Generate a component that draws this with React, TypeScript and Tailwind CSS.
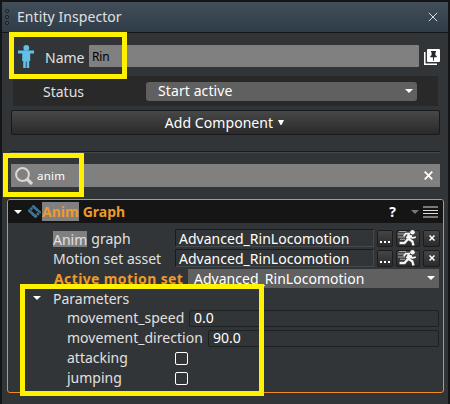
import type { ReactNode } from "react";

function Caret({ className = "" }: { className?: string }) {
  return (
    <svg viewBox="0 0 8 4" className={`h-[4px] w-[8px] shrink-0 ${className}`} fill="currentColor">
      <path d="M0 0h8L4 4z" />
    </svg>
  );
}

function PersonIcon() {
  return (
    <svg viewBox="0 0 16 23" className="h-[23px] w-[16px] shrink-0" fill="#62bfe6">
      <circle cx="8.300" cy="2.900" r="2.900" />
      <path d="M0 5.600H16V8.500h-3.800V16h-1v7H8.600v-6.500h-.8V23H5.200v-7h-1V8.500H0z" />
    </svg>
  );
}

function PinIcon() {
  return (
    <svg viewBox="0 0 16 16" className="h-[16px] w-[16px] shrink-0">
      <path d="M.8 3v12.200H13" fill="none" stroke="#fff" strokeWidth="1.500" />
      <rect x="3" width="13" height="13" rx="1" fill="#fff" />
      <path d="M7 2h5v1.200h-.6v3L12.700 7v1.200h-2.600L9.800 12h-.6l-.3-3.800H6.300V7l1.300-.8v-3H7z" fill="#252729" />
    </svg>
  );
}

function SearchIcon() {
  return (
    <svg viewBox="0 0 18 18" className="h-[18px] w-[18px] shrink-0" fill="none" stroke="#d8d8d8">
      <circle cx="7.500" cy="7.500" r="6.400" strokeWidth="2" />
      <path d="M12 12l5 5" strokeWidth="3.200" />
    </svg>
  );
}

function CloseIcon({ className }: { className: string }) {
  return (
    <svg viewBox="0 0 10 10" className={`shrink-0 ${className}`} fill="none" stroke="currentColor">
      <path d="M.8.8l8.400 8.400M9.200.8L.8 9.200" />
    </svg>
  );
}

function MenuIcon() {
  return (
    <svg viewBox="0 0 15 12" className="h-[12px] w-[15px] shrink-0" fill="#dddddd">
      <path d="M0 .5h15v1H0zM0 4h15v1H0zM0 7h15v1H0zM0 10.500h15v1H0z" />
    </svg>
  );
}

function GraphIcon() {
  return (
    <svg viewBox="0 0 13 13" className="h-[13px] w-[13px] shrink-0" fill="none">
      <path d="M5.500 1.500l6 5.800-4 4.200-6-5.800z" stroke="#3c7593" strokeWidth="2.800" />
      <path d="M3 1.500l3 3M1 3.500l3 3M7 8l3 3M9 6l3 3" stroke="#151515" strokeWidth=".7" />
      <path d="M6.500 2.500L8 4M4 9.500L5.500 11" stroke="#3c7593" strokeWidth="1" />
    </svg>
  );
}

function RunnerIcon() {
  return (
    <svg viewBox="0 0 20 16" className="h-[16px] w-[20px]" fill="none" stroke="#f4f4f4">
      <circle cx="14.500" cy="2.300" r="2.300" fill="#f4f4f4" stroke="none" />
      <path d="M12 4.800L9.800 9" strokeWidth="4.600" />
      <path d="M12 3.700L7.500 3.600 5.800 6.500M12.500 5.500l1.700 2.500 3.600-.8" strokeWidth="1.700" />
      <path d="M9.500 8.500l4.800 2.700 1.200 4.300M9.500 9.500L6.500 13H1.500" strokeWidth="2.400" />
      <path d="M1 1.500h7M0 4h6M0 7h7M2 9.300h5" strokeWidth="1" stroke="#a5a5a5" />
    </svg>
  );
}

function SmallButton({ children, className }: { children: ReactNode; className: string }) {
  return (
    <div className={`flex h-[17px] shrink-0 items-center justify-center rounded-[2px] border border-[#1a1c1d] bg-linear-to-b from-[#454545] to-[#2b2b2b] ${className}`}>
      {children}
    </div>
  );
}

function AssetRow({ children }: { children: ReactNode }) {
  return (
    <div className="flex h-5 items-center pl-[45px]">
      <div className="mt-px flex h-5 w-[122px] items-center">{children}</div>
      <div className="flex h-[18px] w-[199px] items-center border border-r-[#45494b] border-b-[#45494b] border-t-[#191b1c] border-l-[#191b1c] pl-[3px] tracking-[0.02px] text-white">
        <span className="mt-px">Advanced_RinLocomotion</span>
      </div>
      <SmallButton className="ml-[3px] w-[16px]">
        <span className="mt-[8px] flex gap-[2px]">
          <i className="size-[2px] bg-white" />
          <i className="size-[2px] bg-white" />
          <i className="size-[2px] bg-white" />
        </span>
      </SmallButton>
      <SmallButton className="ml-[3px] w-[24px]">
        <RunnerIcon />
      </SmallButton>
      <SmallButton className="ml-[3px] w-[17px] text-white">
        <CloseIcon className="size-[6px] stroke-[2.500]" />
      </SmallButton>
    </div>
  );
}

function NumberRow({ label, value, labelWidth }: { label: string; value: string; labelWidth: string }) {
  return (
    <div className="flex h-5 items-center pl-[59px] pr-[4px]">
      <div className={`shrink-0 tracking-[0.03px] ${labelWidth}`}>{label}</div>
      <div className="flex h-[17px] flex-1 items-center rounded-[2px] border border-[#1e2021] pl-[4px] text-white">{value}</div>
    </div>
  );
}

function CheckRow({ label }: { label: string }) {
  return (
    <div className="flex h-5 items-center pl-[59px]">
      <div className="w-[108px]">{label}</div>
      <div className="size-[13px] rounded-[2px] border border-white" />
    </div>
  );
}

function Highlight({ className }: { className: string }) {
  return <div className={`pointer-events-none absolute border-5 border-[#fff200] ${className}`} />;
}

export default function App() {
  return (
    <div className="relative h-[404px] w-[450px] overflow-hidden bg-[#141516] pl-[2px] pr-[2px] pt-[2px] font-['Noto_Sans',sans-serif] text-[14px] leading-[20px] whitespace-nowrap text-[#e0e0e0]">
      <header className="flex h-[30px] items-center bg-linear-to-b from-[#424e59] to-[#2f3d48] pl-[3px] pr-[10px]">
        <div className="flex flex-col gap-[2px]">
          <i className="size-[4px] rounded-full border border-[#15191c] bg-[#596169]" />
          <i className="size-[4px] rounded-full border border-[#15191c] bg-[#596169]" />
          <i className="size-[4px] rounded-full border border-[#15191c] bg-[#596169]" />
        </div>
        <h1 className="ml-[8px] flex-1 tracking-[0.07px]">Entity Inspector</h1>
        <CloseIcon className="size-[10px] text-[#d7dadd]" />
      </header>

      <main className="mt-px h-[371px] bg-[#323537] pt-[12px]">
        <div className="flex h-[22px] items-center pl-[16px]">
          <PersonIcon />
          <div className="ml-[11px] mt-[3px] w-[44px]">Name</div>
          <div className="flex h-[22px] w-[330px] shrink-0 items-center rounded-[1px] bg-[#808080] pl-[3px] text-[12px] tracking-[-0.2px] text-black">
            <span className="mt-[2px]">Rin</span>
          </div>
          <div className="ml-[5px] mt-[2px]">
            <PinIcon />
          </div>
        </div>

        <div className="ml-[11px] mt-[9px] flex h-[30px] w-[425px] items-center bg-[#292929] pl-[30px]">
          <div className="mt-[2px] w-[103px]">Status</div>
          <div className="flex h-[19px] w-[271px] items-center justify-between rounded-[3px] bg-[#606060] pl-[12px] pr-[4px] tracking-[0.1px] text-white">
            Start active
            <Caret />
          </div>
        </div>

        <div className="ml-[9px] mt-[4px] flex h-[25px] w-[429px] items-center justify-center gap-[5px] rounded-[2px] border border-[#17191a] bg-linear-to-b from-[#484848] to-[#2a2a2a] pr-[2px] text-white">
          <span className="tracking-[0.06px]">Add Component</span>
          <svg viewBox="0 0 6 5" className="h-[5px] w-[6px]" fill="currentColor">
            <path d="M0 0h6L3.500 5h-1z" />
          </svg>
        </div>

        <div className="ml-[9px] mt-[16px] h-[2px] w-[429px] border-t border-b border-t-[#181a1b] border-b-[#46494b]" />

        <div className="ml-[9px] mt-[11px] flex h-[23px] w-[429px] items-center bg-[#808080] pl-[4px] pr-[7px] text-[11.500px] tracking-[0.2px] text-white">
          <SearchIcon />
          <span className="ml-[4px] flex-1">anim</span>
          <CloseIcon className="size-[9px] stroke-2" />
        </div>

        <section className="ml-[5px] mt-[12px] h-[194px] w-[437px] overflow-hidden rounded-[3px] border border-[#f08a25]">
          <div className="flex h-[23px] items-center bg-[#151515] pl-[6px] pr-[5px] font-bold text-[#ee9a2d]">
            <Caret className="text-white" />
            <span className="ml-[6px]">
              <GraphIcon />
            </span>
            <span className="ml-px h-[19px] leading-[19px]">
              <span className="inline-block h-[19px] w-[37px] bg-[#808080]">Anim</span> Graph
            </span>
            <span className="ml-auto text-white">?</span>
            <Caret className="ml-[15px] text-[#777777]" />
            <span className="ml-[4px]">
              <MenuIcon />
            </span>
          </div>
          <div className="pt-[5px]">
            <AssetRow>
              <span className="h-[16px] bg-[#808080] leading-[17px]">Anim</span>
              <span className="ml-[4px]">graph</span>
            </AssetRow>
            <AssetRow>Motion set asset</AssetRow>
            <div className="flex h-5 items-center pl-[46px]">
              <div className="mt-px w-[134px] font-bold tracking-[0.38px] text-[#ee9a2d]">Active motion set</div>
              <div className="flex h-[19px] w-[251px] items-center justify-between bg-[#606060] pl-[6px] pr-[4px] tracking-[0.02px] text-white">
                <span className="mt-px">Advanced_RinLocomotion</span>
                <Caret />
              </div>
            </div>
            <div className="flex h-5 items-center pl-[25px]">
              <Caret className="text-white" />
              <span className="ml-[12px] mt-px">Parameters</span>
            </div>
            <NumberRow label="movement_speed" value="0.0" labelWidth="w-[122px]" />
            <NumberRow label="movement_direction" value="90.0" labelWidth="w-[141px]" />
            <CheckRow label="attacking" />
            <CheckRow label="jumping" />
          </div>
        </section>
      </main>

      <Highlight className="left-[9px] top-[32px] h-[47px] w-[118px]" />
      <Highlight className="left-[3px] top-[153px] h-[44px] w-[81px]" />
      <Highlight className="left-[20px] top-[284px] h-[112px] w-[244px]" />
    </div>
  );
}
